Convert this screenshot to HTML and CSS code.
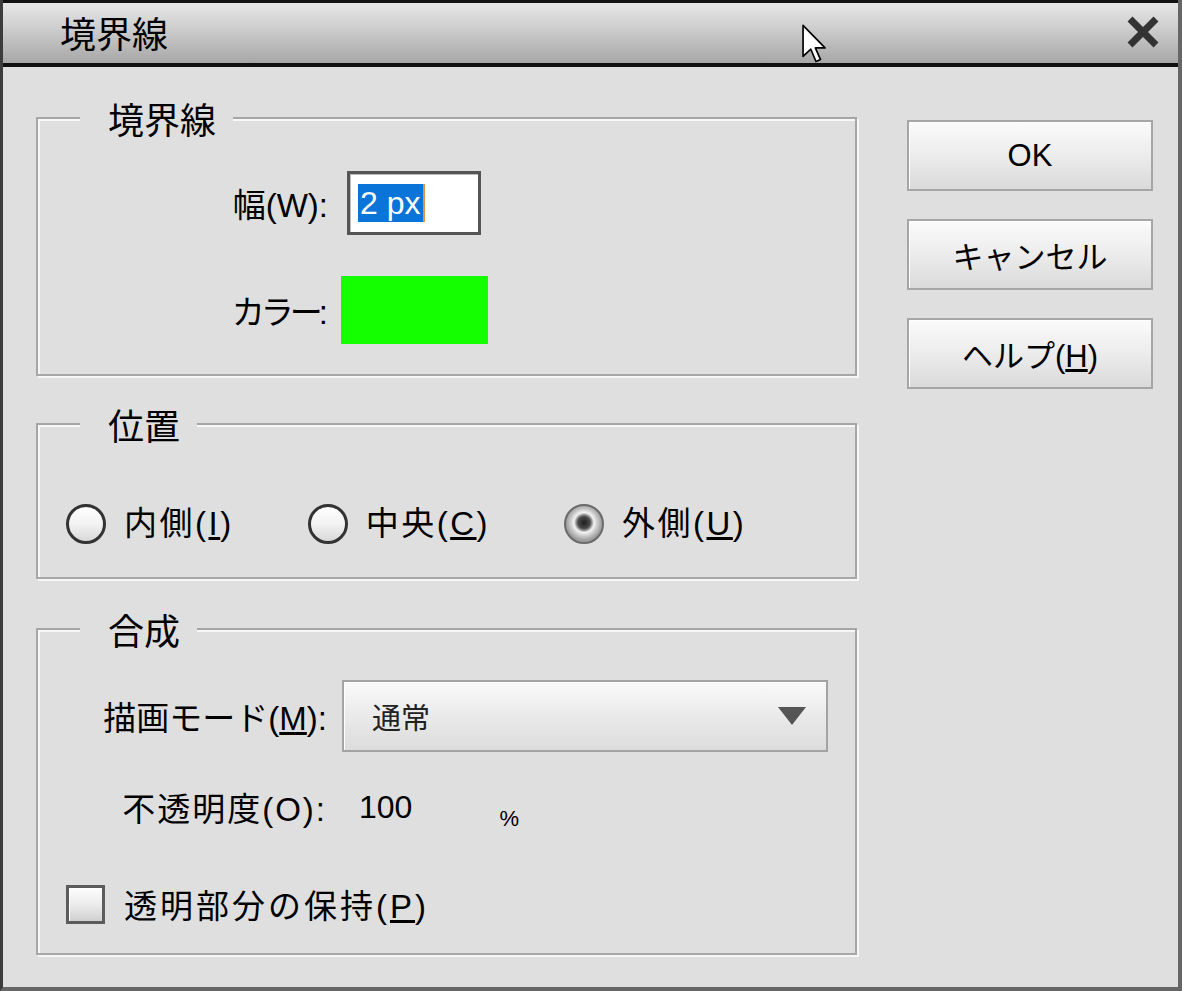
FILE: index.html
```html
<!DOCTYPE html>
<html lang="ja">

<head>
    <meta charset="UTF-8">
    <meta name="viewport" content="width=device-width, initial-scale=1.0">
    <title>境界線</title>
    <link rel="stylesheet" href="styles.css">
</head>

<body>
    <div class="dialog">
        <!-- Title bar -->
        <div class="titlebar">
            <span class="title">境界線</span>
            <svg class="close" viewBox="0 0 34 34" width="34" height="34">
                <path d="M4 4 L30 30 M30 4 L4 30" stroke="#333" stroke-width="7" fill="none" />
            </svg>
        </div>

        <div class="content">
            <div class="groups">
                <!-- Border -->
                <fieldset class="group">
                    <legend>境界線</legend>
                    <div class="border-grid">
                        <span class="label">幅(W):</span>
                        <div class="text-input"><span class="selected">2 px</span><span class="caret"></span></div>
                        <span class="label label-kana">カラー:</span>
                        <div class="swatch"></div>
                    </div>
                </fieldset>

                <!-- Position -->
                <fieldset class="group group-position">
                    <legend>位置</legend>
                    <div class="radio-row">
                        <div class="radio-item"><span class="radio"></span><span>内側(<u>I</u>)</span></div>
                        <div class="radio-item"><span class="radio"></span><span>中央(<u>C</u>)</span></div>
                        <div class="radio-item"><span class="radio checked"></span><span>外側(<u>U</u>)</span></div>
                    </div>
                </fieldset>

                <!-- Blending -->
                <fieldset class="group group-blend">
                    <legend>合成</legend>
                    <div class="blend-grid">
                        <span class="label">描画モード(<u>M</u>):</span>
                        <div class="select">
                            <span>通常</span>
                            <span class="arrow"></span>
                        </div>
                        <span class="label label-wide">不透明度(O):</span>
                        <div class="opacity">
                            <span class="value">100</span>
                            <span class="percent">%</span>
                        </div>
                    </div>
                    <div class="check-row">
                        <span class="checkbox"></span>
                        <span>透明部分の保持(<u>P</u>)</span>
                    </div>
                </fieldset>
            </div>

            <!-- Buttons -->
            <div class="buttons">
                <button class="btn">OK</button>
                <button class="btn">キャンセル</button>
                <button class="btn">ヘルプ(<u>H</u>)</button>
            </div>
        </div>

        <svg class="cursor" viewBox="0 0 22 34" width="30" height="44">
            <path d="M1 1 L1 25 L7 19.5 L11 29 L14.5 27.5 L10.5 18.5 L18 18.5 Z" fill="#fff" stroke="#000" stroke-width="1.3" stroke-linejoin="round" />
        </svg>
    </div>
</body>

</html>
```

FILE: styles.css
```css
/* Dialog base */
body {
    margin: 0;
    padding: 0;
    font-family: "Liberation Sans", "Noto Sans CJK JP", sans-serif;
    color: #000;
    background-color: #dfdfdf;
}

.dialog {
    position: relative;
    width: 1182px;
    height: 991px;
    box-sizing: border-box;
    background-color: #dfdfdf;
    border-left: 3px solid #3c3c3c;
    border-right: 4px solid #666;
    border-bottom: 4px solid #666;
    overflow: hidden;
}

.titlebar {
    display: flex;
    align-items: center;
    justify-content: space-between;
    height: 60px;
    margin-left: -3px;
    margin-right: -4px;
    padding: 0 20px 0 57px;
    border-top: 3px solid #111;
    border-left: 3px solid #111;
    border-right: 2px solid #333;
    border-bottom: 4px solid #111;
    background: linear-gradient(#e6e6e6, #d2d2d2 35%, #a7a7a7);
}

.title {
    font-size: 36px;
    line-height: 36px;
    padding-top: 6px;
}

.close {
    display: block;
    margin-top: -3px;
}

.content {
    display: flex;
    padding-left: 33px;
}

.groups {
    width: 821px;
    padding-top: 33px;
}

/* Group boxes */
.group {
    margin: 0 0 30px 0;
    padding: 0;
    border: 2px solid #a6a6a6;
    box-shadow: inset 2px 2px 0 #f7f7f7, 2px 2px 0 #f7f7f7;
    min-width: 0;
}

.group legend {
    margin-left: 42px;
    padding: 0 17px 0 28px;
    font-family: "Noto Sans CJK JP", sans-serif;
    font-size: 36px;
    line-height: 36px;
    background-color: #dfdfdf;
}

.group-blend {
    margin-top: 32px;
}

.label {
    font-size: 33px;
    text-align: right;
    white-space: nowrap;
}

.label-kana {
    letter-spacing: -4px;
    padding-right: 4px;
}

.label-wide {
    letter-spacing: 2px;
}

/* Border section */
.border-grid {
    display: grid;
    grid-template-columns: 290px auto;
    align-items: center;
    row-gap: 41px;
    margin: 35px 0 30px 0;
}

.text-input {
    display: flex;
    align-items: center;
    width: 134px;
    height: 64px;
    margin-left: 19px;
    box-sizing: border-box;
    padding-left: 8px;
    background-color: #fff;
    border: 3px solid #555;
    box-shadow: inset 1px 1px 0 #bbb;
}

.selected {
    font-size: 32px;
    line-height: 38px;
    padding: 0 3px 0 2px;
    color: #fff;
    background-color: #0a74d8;
}

.caret {
    width: 2px;
    height: 38px;
    background-color: #e8913a;
}

.swatch {
    width: 147px;
    height: 68px;
    margin-left: 13px;
    background-color: #14ff00;
}

/* Position section */
.radio-row {
    display: flex;
    gap: 74px;
    margin: 62px 0 33px 28px;
}

.radio-item {
    display: flex;
    align-items: center;
    gap: 18px;
    font-size: 33px;
    line-height: 40px;
    letter-spacing: 2.5px;
}

.radio {
    width: 40px;
    height: 40px;
    box-sizing: border-box;
    border-radius: 50%;
    border: 3px solid #333;
    background: linear-gradient(#ffffff, #f2f2f2 50%, #d9d9d9);
}

.radio.checked {
    border: 2px solid #6a6a6a;
    background: radial-gradient(circle at 50% 46%, #1e1e1e 0, #4a4a4a 6px, #9a9a9a 8px, #f4f4f4 10px, #cfcfcf 13px, #9c9c9c 18px);
}

/* Blend section */
.blend-grid {
    display: grid;
    grid-template-columns: 289px auto;
    align-items: center;
    row-gap: 31px;
    margin-top: 33px;
}

.select {
    display: flex;
    align-items: center;
    justify-content: space-between;
    width: 486px;
    height: 72px;
    margin-left: 15px;
    box-sizing: border-box;
    padding: 0 20px 0 28px;
    font-family: "Noto Sans CJK JP", sans-serif;
    font-size: 29px;
    color: #222;
    border: 2px solid #a3a3a3;
    box-shadow: inset 1px 1px 0 #fff;
    background: linear-gradient(#fafafa, #eaeaea 50%, #dcdcdc);
}

.arrow {
    width: 0;
    height: 0;
    border-left: 14px solid transparent;
    border-right: 14px solid transparent;
    border-top: 18px solid #555;
}

.opacity {
    display: flex;
    align-items: flex-start;
    height: 40px;
    margin-left: 32px;
    font-size: 32px;
    line-height: 40px;
}

.percent {
    margin-left: 87px;
    padding-top: 12px;
    font-size: 22px;
    line-height: 40px;
}

.check-row {
    display: flex;
    align-items: center;
    gap: 19px;
    margin: 49px 0 25px 28px;
    font-size: 33px;
    letter-spacing: 3px;
}

.checkbox {
    width: 39px;
    height: 39px;
    box-sizing: border-box;
    border: 3px solid #5c5c5c;
    box-shadow: inset 1px 1px 0 #fff;
    background: linear-gradient(#fdfdfd, #ececec 50%, #d0d0d0);
}

/* Buttons */
.buttons {
    display: flex;
    flex-direction: column;
    gap: 28px;
    margin: 53px 0 0 50px;
}

.btn {
    width: 246px;
    height: 71px;
    padding: 0;
    font-family: "Liberation Sans", "Noto Sans CJK JP", sans-serif;
    font-size: 31px;
    color: #000;
    border: 2px solid #a6a6a6;
    box-shadow: inset 1px 1px 0 #fff;
    background: linear-gradient(#fbfbfb, #ececec 50%, #dadada);
}

.cursor {
    position: absolute;
    left: 798px;
    top: 24px;
}
```
